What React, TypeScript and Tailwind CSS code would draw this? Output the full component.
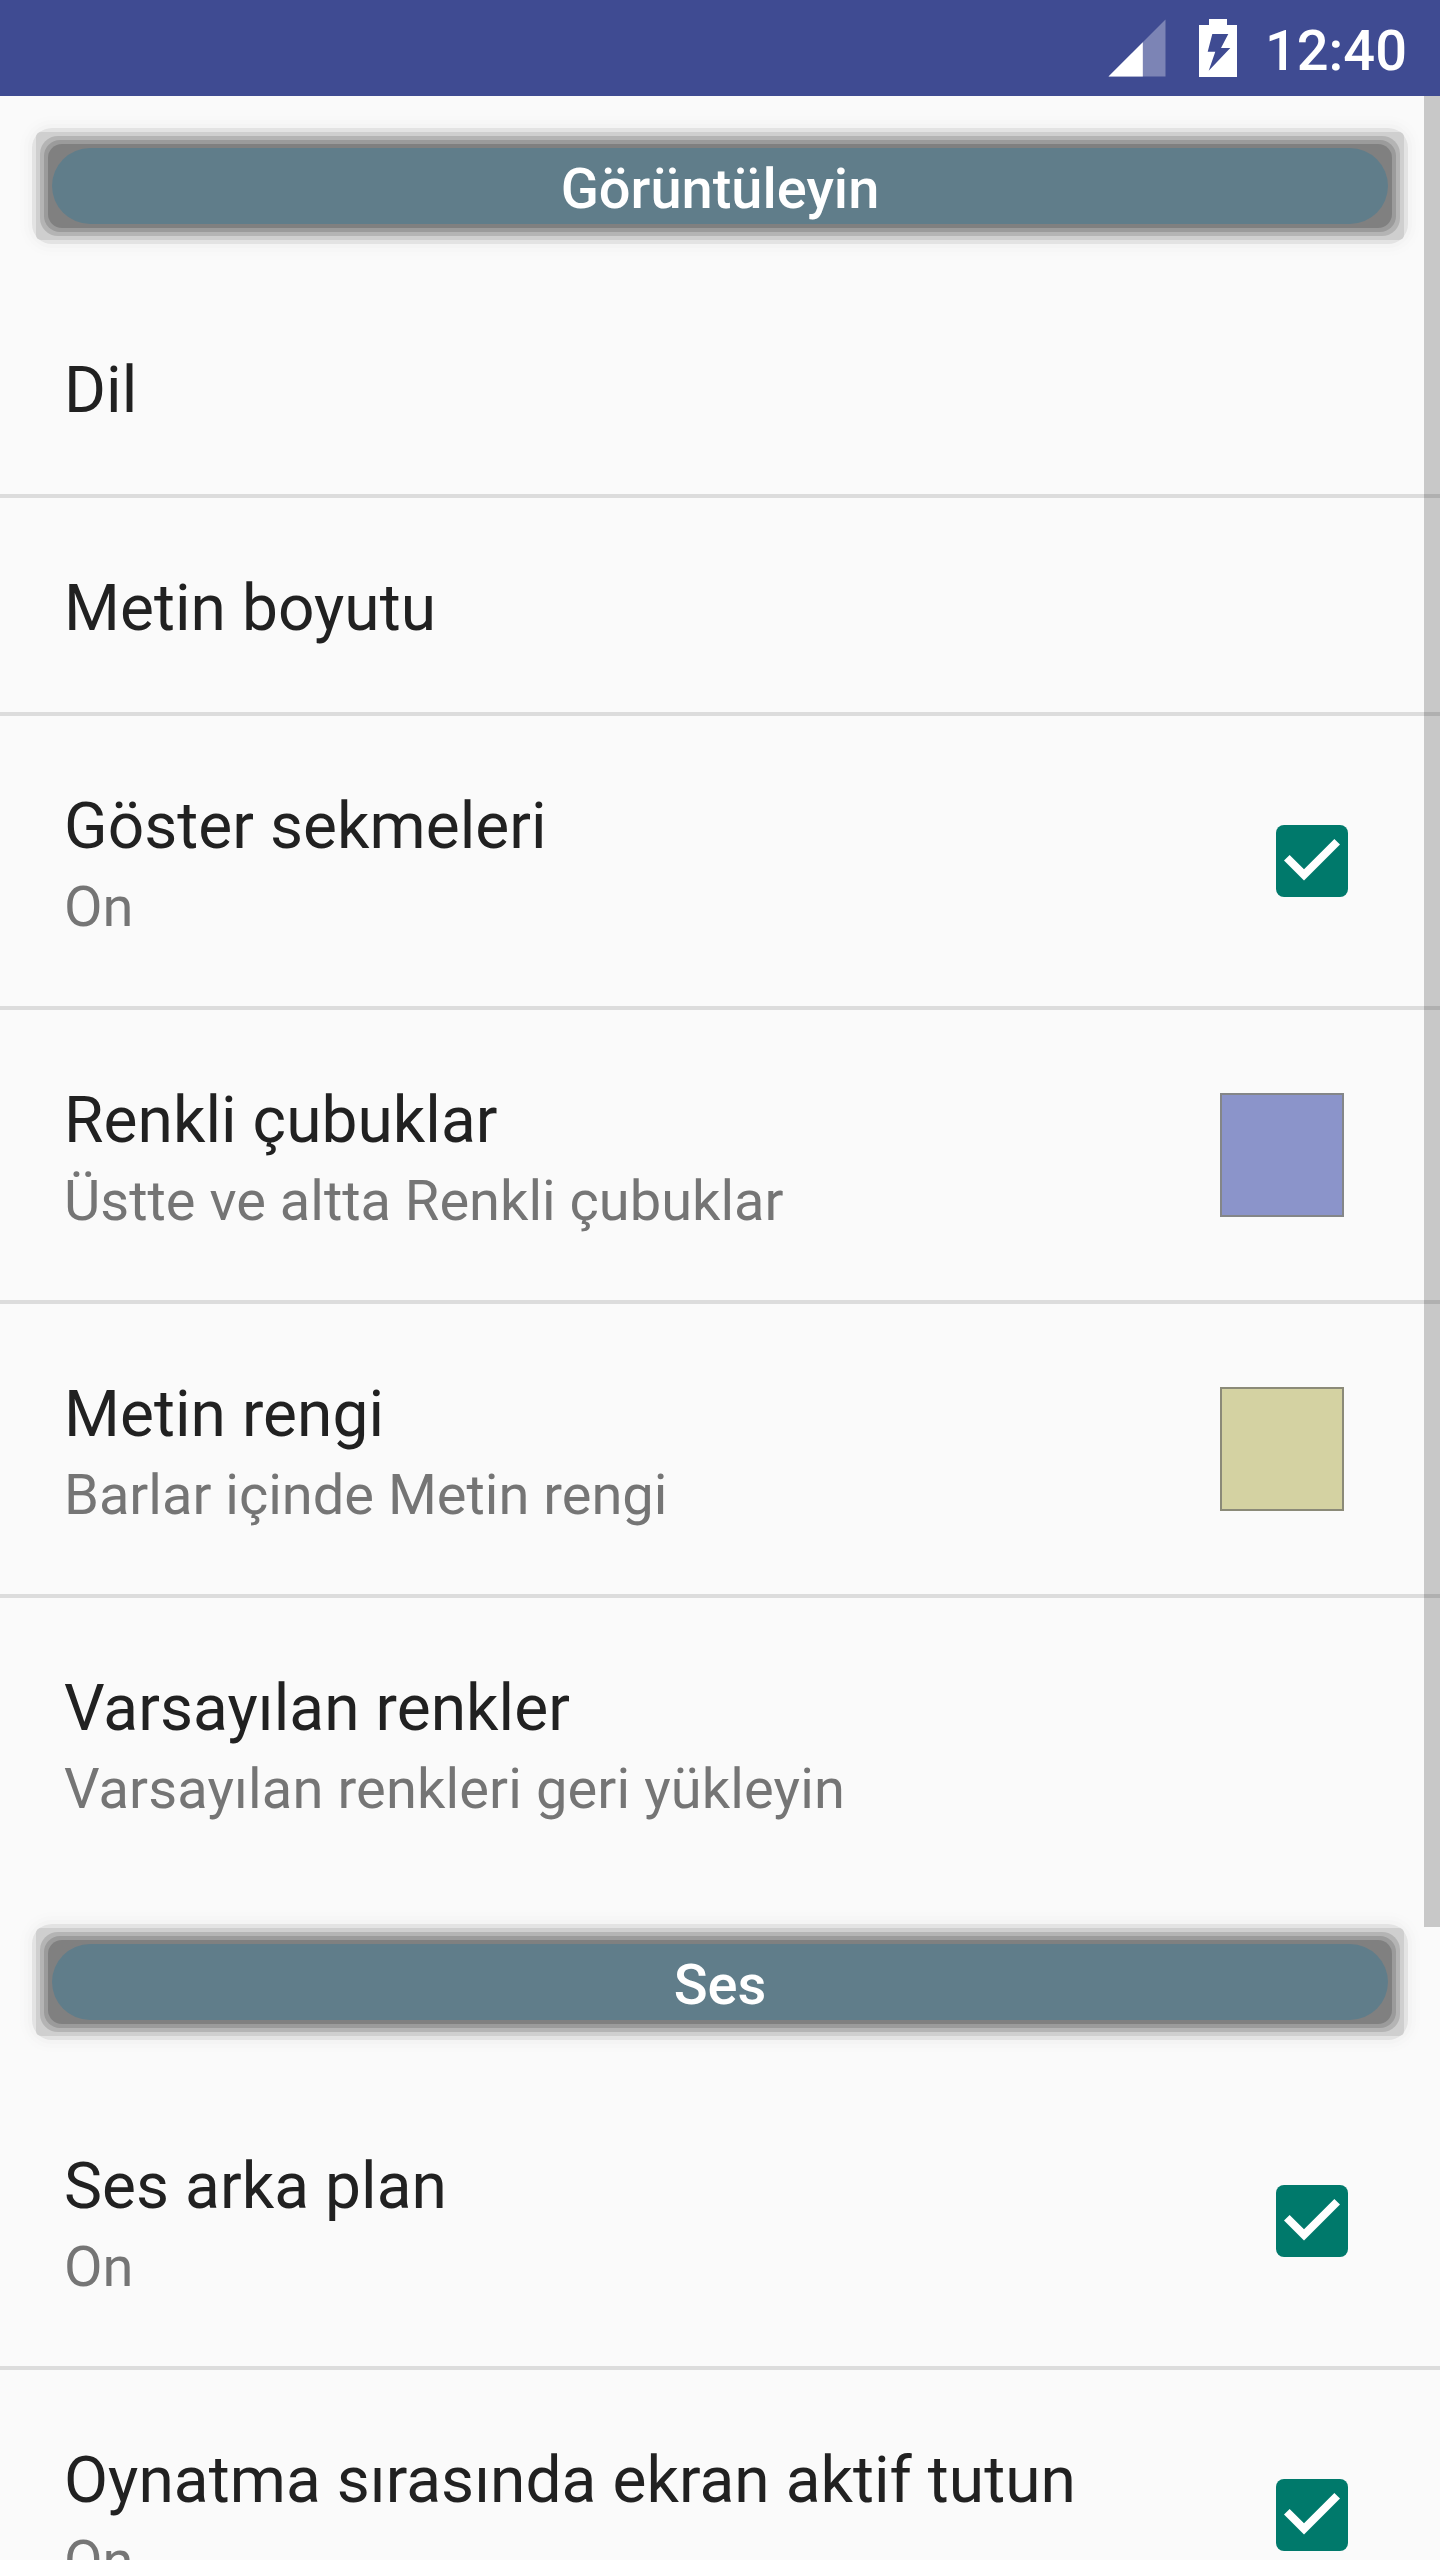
import type { ReactNode } from 'react';

function StatusBar() {
  return (
    <header className="flex h-24 items-start justify-end bg-[#3f4b92] text-white">
      <svg className="mt-[19px] h-[58px] w-[58px]" viewBox="0 0 58 58">
        <path d="M0.5 57.5L57.5 0.5V57.5z" fill="#fff" fillOpacity="0.32" />
        <path d="M0.5 57.5L34.8 23.2V57.5z" fill="#fff" />
      </svg>
      <svg className="mt-[19px] ml-[33px] h-[58px] w-[38px]" viewBox="0 0 38 58">
        <path d="M10 0h18v6h10v52H0V6h10z" fill="#fff" />
        <path d="M13.3 15h16l-7.3 14h9.3L9.7 51.7l6.6-19H8.7z" fill="#3f4b92" />
      </svg>
      <span className="mt-[18px] mr-[33px] ml-[28px] text-[56px] leading-[66px] font-medium">12:40</span>
    </header>
  );
}

function SectionHeader({ title }: { title: string }) {
  return (
    <div className="h-[184px] px-8 pt-8">
      {/* stepped grey glow, one 4px band per wrapper */}
      <div className="rounded-[20px] bg-[#e3e3e3] p-1 shadow-[0_0_0_4px_#f4f4f4,0_0_0_8px_#f7f7f7,0_0_0_12px_#f9f9f9]">
        <div className="rounded-[5px] bg-[#cfcfcf] p-1">
          <div className="rounded-[18px] bg-[#b4b4b4] p-1">
            <div className="rounded-2xl bg-[#9b9b9b] p-1">
              <div className="rounded-[14px] bg-[#808080] p-1">
                <div className="flex h-[76px] items-center justify-center rounded-full bg-[#607d8a]">
                  <h2 className="pt-1.5 text-[56px] leading-[66px] font-medium text-white">{title}</h2>
                </div>
              </div>
            </div>
          </div>
        </div>
      </div>
    </div>
  );
}

function Checkbox() {
  return (
    <svg className="mr-[28px] h-[72px] w-[72px]" viewBox="3 3 18 18">
      <rect x="3" y="3" width="18" height="18" rx="2" fill="#00796b" />
      <path d="M10 16.9l-5-5 1.41-1.41L10 14.07l7.59-7.59L19 7.9z" fill="#fff" />
    </svg>
  );
}

function Swatch({ className }: { className: string }) {
  return <div className={`mr-8 h-[124px] w-[124px] border-2 ${className}`} />;
}

interface RowProps {
  title: string;
  summary?: string;
  last?: boolean;
  summaryClass?: string;
  children?: ReactNode;
}

function Row({ title, summary, last, summaryClass = '', children }: RowProps) {
  return (
    <div
      className={`flex shrink-0 items-center justify-between border-b-4 pr-16 pl-16 ${summary ? 'h-[294px]' : 'h-[218px]'} ${last ? 'border-transparent' : 'border-[#dcdcdc]'}`}
    >
      <div className="self-start pt-[69px]">
        <p className="text-[64px] leading-[84px] tracking-[0.06px] whitespace-nowrap text-[#212121]">{title}</p>
        {summary && (
          <p className={`text-[56px] leading-[76px] whitespace-nowrap text-[#757575] ${summaryClass}`}>{summary}</p>
        )}
      </div>
      {children}
    </div>
  );
}

export default function App() {
  return (
    <div className="h-[2560px] w-[1440px] overflow-hidden bg-[#fafafa] font-['Roboto',sans-serif]">
      <StatusBar />
      <main className="relative">
        <SectionHeader title="Görüntüleyin" />
        <Row title="Dil" />
        <Row title="Metin boyutu" />
        <Row title="Göster sekmeleri" summary="On">
          <Checkbox />
        </Row>
        <Row title="Renkli çubuklar" summary="Üstte ve altta Renkli çubuklar">
          <Swatch className="border-[#848688] bg-[#8b94ca]" />
        </Row>
        <Row title="Metin rengi" summary="Barlar içinde Metin rengi">
          <Swatch className="border-[#8b8a78] bg-[#d4d2a2]" />
        </Row>
        <Row
          title="Varsayılan renkler"
          summary="Varsayılan renkleri geri yükleyin"
          summaryClass="tracking-[0.13px]"
          last
        />
        <SectionHeader title="Ses" />
        <Row title="Ses arka plan" summary="On">
          <Checkbox />
        </Row>
        <Row title="Oynatma sırasında ekran aktif tutun" summary="On">
          <Checkbox />
        </Row>
        {/* scrollbar */}
        <div className="absolute top-0 right-0 h-[1831px] w-4 bg-black/20" />
      </main>
    </div>
  );
}
